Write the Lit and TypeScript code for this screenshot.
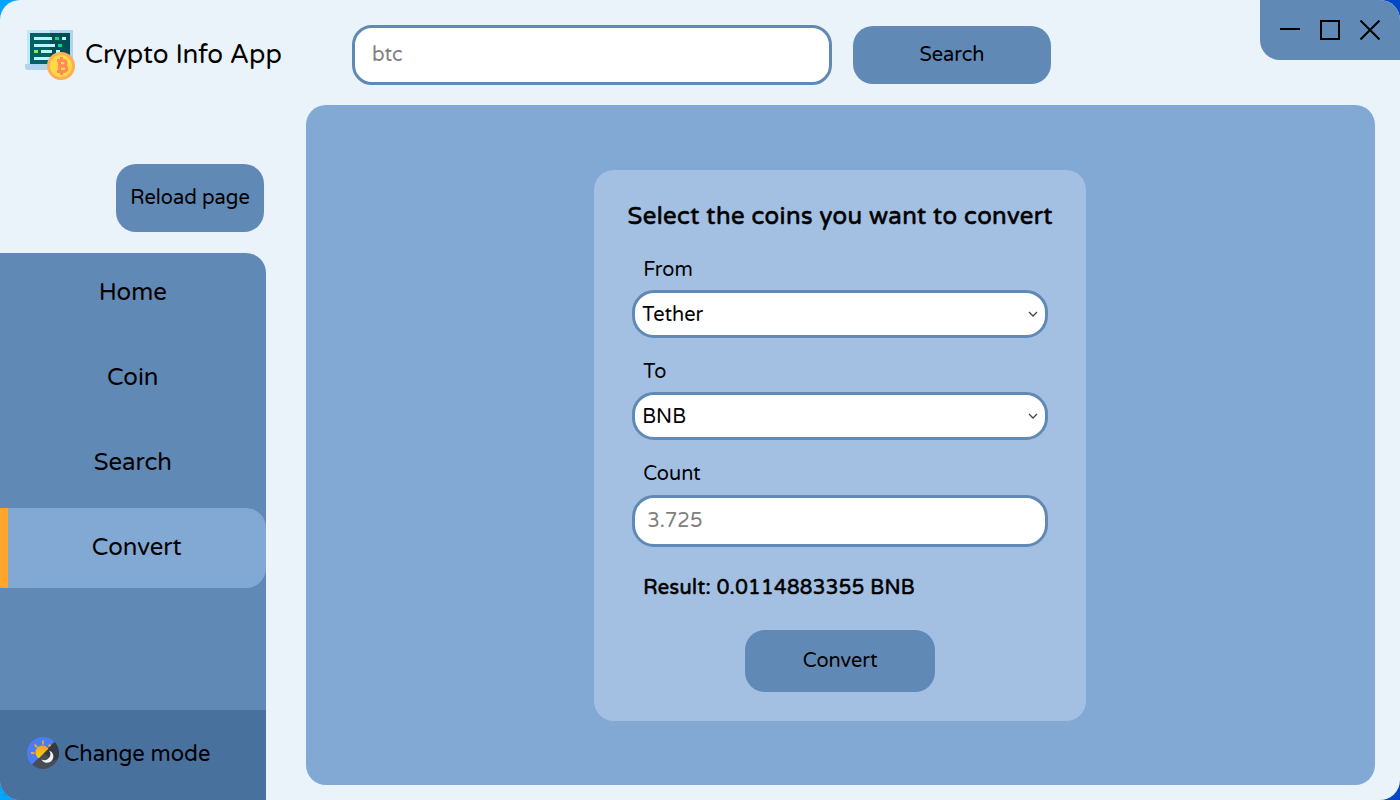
import { LitElement, html, css } from "lit";

const FONT = css`"Varela Round", "Varela", "Noto Sans", sans-serif`;

class AppLogo extends LitElement {
  static styles = css`
    :host { display: block; width: 50px; height: 50px; }
    svg { display: block; }
  `;
  render() {
    return html`<svg width="50" height="50" viewBox="0 0 50 50">
      <path fill="#bfe9f9" d="M2 0h23v35H2z" />
      <path fill="#b0d3f0" d="M25 0h23v35H25z" />
      <path fill="#006166" d="M5 3h20v31H5z" />
      <path fill="#004e55" d="M25 3h20v31H25z" />
      <path fill="#b0d3f0" d="M0 34h50v3q0 3-3 3H3q-3 0-3-3z" />
      <path fill="#bff3fa" d="M9 7h18v3H9zM37 7h4v3h-4zM9 14h21v3H9zM16 20h11v3H16zM31 20h4v3h-4zM9 27h18v3H9z" />
      <path fill="#00dd80" d="M30 7h4v3h-4zM33 14h4v3h-4z" />
      <path fill="#8ee45c" d="M9 20h4v3H9z" />
      <circle cx="36" cy="36" r="14" fill="#ffae55" />
      <circle cx="36" cy="36" r="11" fill="#ffd944" />
      <path fill="none" stroke="#ff8a5a" stroke-width="3"
        d="M36.500 27v4M36.500 41v4M32 30.500h6q3 0 3 2.700t-3 2.700h-3.500M32 41.500h6.500q3.200 0 3.200-2.900t-3.200-2.800h-3.500M34.500 30v11.500" />
    </svg>`;
  }
}
customElements.define("app-logo", AppLogo);

class ModeIcon extends LitElement {
  static styles = css`
    :host { display: block; width: 32px; height: 32px; }
    svg { display: block; }
  `;
  render() {
    return html`<svg width="32" height="32" viewBox="0 0 32 32">
      <defs>
        <clipPath id="disc"><circle cx="16" cy="16" r="16" /></clipPath>
        <clipPath id="day"><path d="M0 0H33L0 33z" /></clipPath>
        <linearGradient id="sun" x1="0" y1="0" x2="0" y2="1">
          <stop offset="0" stop-color="#f7a31c" /><stop offset="1" stop-color="#ffd500" />
        </linearGradient>
      </defs>
      <g clip-path="url(#disc)">
        <path fill="#4b7cf8" d="M0 0h32v32H0z" />
        <path fill="#3a62d0" d="M20 10L27 5L17 16z" />
        <path fill="#454d57" d="M33-.5v33H0z" />
        <path fill="#343b45" d="M33-.5v22L25 24L17 16z" />
        <circle cx="15.500" cy="15.500" r="7" fill="url(#sun)" clip-path="url(#day)" />
        <path fill="none" stroke="#f5a623" stroke-width="1.800" d="M16 3.500v4M7.500 7.500l2.800 2.800M4 16h3.500M23.500 7.500l-2 2" />
        <path fill="#f1f3f6" d="M22 13.500a6.300 6.300 0 1 1-7.500 9a6 6 0 0 0 7.500-9z" />
      </g>
    </svg>`;
  }
}
customElements.define("mode-icon", ModeIcon);

const MENU = ["Home", "Coin", "Search", "Convert"];

class AppRoot extends LitElement {
  static properties = { active: { state: true } };
  declare active: string;

  constructor() {
    super();
    this.active = "Convert";
  }

  static styles = css`
    * { box-sizing: border-box; }
    :host {
      display: block; width: 1400px; height: 800px; overflow: hidden; color: #000;
      font-family: ${FONT};
      background: linear-gradient(90deg, #00a5ff 0 50%, #0048c8 50%);
    }
    .window {
      width: 1400px; height: 800px; border-radius: 20px; overflow: hidden;
      background: #eaf2fa; display: grid;
      grid-template: 105px 695px / 305.500px 1fr;
    }
    .brand { display: flex; padding: 30px 0 0 25px; gap: 10px; font-size: 26px; line-height: 50px; white-space: nowrap; }
    .top { display: flex; align-items: flex-start; }
    .query {
      margin: 25px 0 0 46.500px; width: 480px; height: 60px; border: 3px solid #6089b5; border-radius: 20px;
      background: #fff; color: #808080; font-size: 20px; line-height: 54px; padding-left: 17px;
    }
    button { border: 0; padding: 0; font-family: inherit; color: inherit; background: #6089b5; border-radius: 20px; font-size: 20px; }
    .find { margin: 26px 0 0 21px; width: 198px; height: 58px; }
    .controls {
      margin-left: auto; width: 140px; height: 60px; background: #6089b5; border-bottom-left-radius: 20px;
      display: flex; gap: 20px; padding: 20px;
    }
    .controls svg { display: block; fill: none; stroke: #000; stroke-width: 2; }
    .side { display: flex; flex-direction: column; align-items: flex-start; padding-top: 59px; }
    .reload { width: 148px; height: 68px; margin: 0 0 20.500px 116px; }
    .menu {
      width: 265.500px; flex: 1; background: #6089b5; border-top-right-radius: 20px;
      display: flex; flex-direction: column; gap: 5px; padding-top: .5px; overflow: hidden;
    }
    .item { height: 80px; font-size: 24px; line-height: 80px; text-align: center; }
    .item.on { background: #82a8d4; border-left: 8px solid #ffa42c; border-radius: 0 20px 20px 0; }
    .mode { margin-top: auto; height: 90px; background: #48719e; display: flex; align-items: center; padding: 0 0 5px 27px; gap: 5px; font-size: 22px; white-space: nowrap; }
    .mode span, .sel span { padding-top: 2px; }
    .panel { width: 1069.500px; height: 680px; border-radius: 20px; background: #82a8d4; display: flex; justify-content: center; padding-top: 64.500px; }
    .card {
      width: 492px; height: 551px; border-radius: 20px; background: #a3c0e3; padding: 0 38px;
      display: flex; flex-direction: column;
    }
    h1 { margin: 32px -20px 0; font-size: 24px; line-height: 30px; font-weight: 400; -webkit-text-stroke: .6px #000; letter-spacing: .38px; text-align: center; white-space: nowrap; }
    .label { margin-left: 11px; font-size: 20px; line-height: 24px; }
    .field {
      height: 48px; border: 3px solid #6089b5; border-radius: 22px; background: #fff;
      display: flex; align-items: center; justify-content: space-between; padding: 0 6px 0 7px; font-size: 20px;
    }
    .field svg { display: block; }
    .from { margin-top: 26px; }
    .gap { margin-top: 22px; }
    .sel { margin-top: 8px; }
    .num { margin-top: 9px; height: 52px; color: #808080; padding: 1px 0 0 12px; }
    .result { margin: 27px 0 0 11px; font-size: 20px; line-height: 28px; -webkit-text-stroke: .6px #000; letter-spacing: .38px; white-space: nowrap; }
    .go { align-self: center; margin-top: 28px; width: 190px; height: 62px; }
  `;

  render() {
    const chevron = html`<svg width="12" height="8" viewBox="0 0 12 8"><path fill="none" stroke="#444" stroke-width="1.300" d="M2 2l4 4l4-4" /></svg>`;
    return html`<div class="window">
      <div class="brand"><app-logo></app-logo><span>Crypto Info App</span></div>
      <div class="top">
        <div class="query">btc</div>
        <button class="find">Search</button>
        <div class="controls">
          <svg width="20" height="20"><path d="M0 9h20" /></svg>
          <svg width="20" height="20"><path d="M1 1h18v18H1z" /></svg>
          <svg width="20" height="20"><path d="M.5.5l19 19M19.500.5l-19 19" /></svg>
        </div>
      </div>
      <div class="side">
        <button class="reload">Reload page</button>
        <div class="menu">
          ${MENU.map((m) => html`<div class="item ${m === this.active ? "on" : ""}">${m}</div>`)}
          <div class="mode"><mode-icon></mode-icon><span>Change mode</span></div>
        </div>
      </div>
      <div class="panel">
        <div class="card">
          <h1>Select the coins you want to convert</h1>
          <div class="label from">From</div>
          <div class="field sel"><span>Tether</span>${chevron}</div>
          <div class="label gap">To</div>
          <div class="field sel"><span>BNB</span>${chevron}</div>
          <div class="label gap">Count</div>
          <div class="field num"><span>3.725</span></div>
          <div class="result">Result: 0.0114883355 BNB</div>
          <button class="go">Convert</button>
        </div>
      </div>
    </div>`;
  }
}
customElements.define("app-root", AppRoot);
